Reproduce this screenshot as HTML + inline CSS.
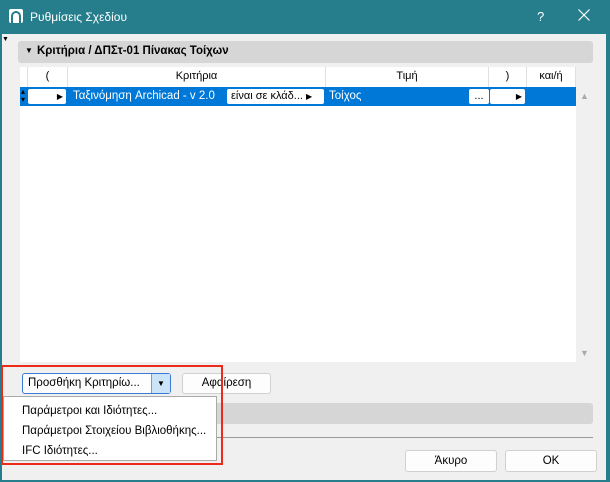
<!DOCTYPE html><html><head><style>
*{box-sizing:border-box;margin:0;padding:0}
body{width:610px;height:482px;background:#267e8d;font-family:"Liberation Sans",sans-serif;font-size:11px;position:relative;overflow:hidden;color:#000}
.a{position:absolute}
.win{left:2px;top:34px;width:604px;height:446px;background:#f0f0f0}
.btn{background:#fdfdfd;border:1px solid #d0d0d0;border-radius:3px;text-align:center;line-height:19px;font-size:11.5px}
.th{top:67px;height:20px;line-height:18px;text-align:center;border-right:1px solid #e0e0e0;font-size:11px}
.wb{background:#fff;border-radius:2px;color:#000;height:15px;top:89px;font-size:11px;line-height:15px}
</style></head><body>
<div class="a" style="left:9px;top:9px;width:14px;height:14px;background:#fff;border-radius:2px"></div>
<div class="a" style="left:11px;top:11px;width:10px;height:12px;border:2px solid #267e8d;border-bottom:none;border-radius:6px 6px 0 0"></div>
<div class="a" style="left:30px;top:10px;color:#fff;font-size:12px">Ρυθμίσεις Σχεδίου</div>
<div class="a" style="left:537px;top:9px;color:#fff;font-size:13px">?</div>
<svg class="a" style="left:578px;top:9px" width="12" height="12"><path d="M0.5 0.5L11.5 11.5M11.5 0.5L0.5 11.5" stroke="#fff" stroke-width="1.2"/></svg>
<div class="a win"></div>
<div class="a" style="left:2px;top:36px;font-size:7px">▼</div>
<div class="a" style="left:18px;top:41px;width:575px;height:22px;background:#d6d6d6;border-radius:3px"></div>
<div class="a" style="left:25px;top:46px;font-size:8px">▼</div>
<div class="a" style="left:37px;top:45px;font-weight:bold;font-size:11.5px">Κριτήρια / ΔΠΣτ-01 Πίνακας Τοίχων</div>
<div class="a" style="left:20px;top:67px;width:556px;height:295px;background:#fff"></div>
<div class="a th" style="left:20px;width:8px"></div>
<div class="a th" style="left:28px;width:40px">(</div>
<div class="a th" style="left:68px;width:258px">Κριτήρια</div>
<div class="a th" style="left:326px;width:163px">Τιμή</div>
<div class="a th" style="left:489px;width:38px">)</div>
<div class="a th" style="left:527px;width:49px">και/ή</div>
<div class="a" style="left:20px;top:87px;width:556px;height:19px;background:#0078d7"></div>
<div class="a" style="left:21px;top:88px;color:#000;font-size:8px;line-height:8px">▴<br>▾</div>
<div class="a wb" style="left:28px;width:38px;text-align:right;padding-right:3px;font-size:8px">▶</div>
<div class="a" style="left:73px;top:90px;color:#fff;font-size:11.5px">Ταξινόμηση Archicad - v 2.0</div>
<div class="a wb" style="left:227px;width:97px;padding-left:4px">είναι σε κλάδ... <span style="font-size:8px">▶</span></div>
<div class="a" style="left:329px;top:90px;color:#fff;font-size:11.5px">Τοίχος</div>
<div class="a wb" style="left:469px;width:20px;text-align:center">...</div>
<div class="a wb" style="left:490px;width:35px;text-align:right;padding-right:3px;font-size:8px">▶</div>
<div class="a" style="left:580px;top:91px;color:#aaa;font-size:9px">▲</div>
<div class="a" style="left:580px;top:348px;color:#aaa;font-size:9px">▼</div>
<div class="a" style="left:18px;top:403px;width:575px;height:21px;background:#d6d6d6;border-radius:3px"></div>
<div class="a" style="left:18px;top:437px;width:575px;height:1px;background:#999"></div>
<div class="a btn" style="left:22px;top:373px;width:149px;height:21px;border-color:#3a7bd5;text-align:left;padding-left:5px">Προσθήκη Κριτηρίω...</div>
<div class="a" style="left:151px;top:374px;width:19px;height:19px;background:#cce4f7;border-left:1px solid #999;text-align:center;font-size:8px;line-height:19px">▼</div>
<div class="a btn" style="left:182px;top:373px;width:89px;height:21px">Αφαίρεση</div>
<div class="a" style="left:3px;top:396px;width:214px;height:65px;background:#fff;border:1px solid #aaa"></div>
<div class="a" style="left:22px;top:401px;font-size:11.5px;line-height:20px">Παράμετροι και Ιδιότητες...<br>Παράμετροι Στοιχείου Βιβλιοθήκης...<br>IFC Ιδιότητες...</div>
<div class="a" style="left:1px;top:365px;width:222px;height:100px;border:2px solid #ee2a1a"></div>
<div class="a btn" style="left:405px;top:450px;width:92px;height:22px;line-height:20px">Άκυρο</div>
<div class="a btn" style="left:505px;top:450px;width:92px;height:22px;line-height:20px">OK</div>
</body></html>
